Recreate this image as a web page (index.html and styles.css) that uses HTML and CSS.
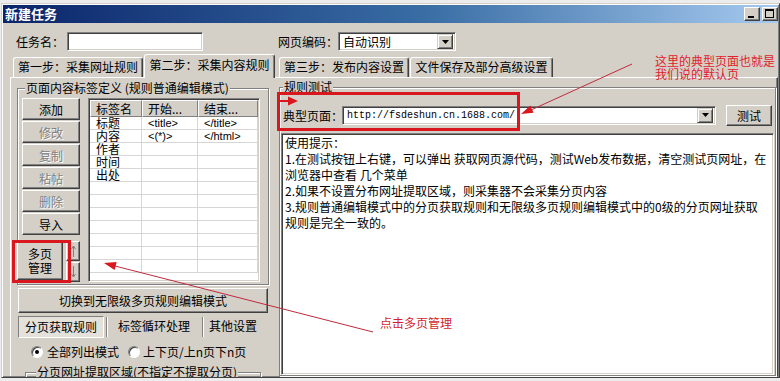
FILE: index.html
```html
<!DOCTYPE html>
<html lang="zh-CN">
<head>
    <meta charset="UTF-8">
    <title>新建任务</title>
    <link rel="stylesheet" href="styles.css">
</head>
<body>
    <!-- Dialog window -->
    <div class="window">
        <div class="titlebar">
            <span class="title">新建任务</span>
            <span class="tb-btn"><span class="min-glyph"></span></span>
            <span class="tb-btn"><span class="max-glyph"></span></span>
        </div>

        <!-- Task name / page encoding -->
        <div class="top-row">
            <span class="lbl name-lbl">任务名：</span>
            <span class="field name-field"></span>
            <span class="lbl enc-lbl">网页编码：</span>
            <span class="field combo enc-combo">
                <span class="combo-text">自动识别</span>
                <span class="drop"><svg width="7" height="4"><path d="M0 0h7L3.5 4z" fill="#000"/></svg></span>
            </span>
        </div>

        <!-- Step tabs -->
        <div class="tabs">
            <span class="tab tab-1">第一步：采集网址规则</span>
            <span class="tab active">第二步：采集内容规则</span>
            <span class="tab tab-3">第三步：发布内容设置</span>
            <span class="tab tab-4">文件保存及部分高级设置</span>
        </div>

        <div class="tab-body">
            <!-- Left side: tag definitions -->
            <div class="left">
                <div class="group tag-group">
                    <div class="legend">页面内容标签定义 (规则普通编辑模式)</div>
                    <div class="tag-inner">
                        <div class="btn-col">
                            <div class="btn">添加</div>
                            <div class="btn disabled">修改</div>
                            <div class="btn disabled">复制</div>
                            <div class="btn disabled">粘帖</div>
                            <div class="btn disabled">删除</div>
                            <div class="btn">导入</div>
                            <div class="multi-row">
                                <div class="btn multi-btn">多页<br>管理</div>
                                <div class="arrow-col">
                                    <div class="btn arrow-btn"><svg width="5" height="12"><path d="M2.5 1v11M0.5 4l2-3 2 3" stroke="#808080" fill="none"/></svg></div>
                                    <div class="btn arrow-btn"><svg width="5" height="12"><path d="M2.5 0v11M0.5 8l2 3 2-3" stroke="#808080" fill="none"/></svg></div>
                                </div>
                            </div>
                        </div>
                        <div class="grid-box">
                            <div class="grid-head">
                                <div class="gh c1">标签名</div>
                                <div class="gh c2">开始...</div>
                                <div class="gh c3">结束...</div>
                            </div>
                            <div class="grid-row"><div class="gc c1">标题</div><div class="gc c2 code">&lt;title&gt;</div><div class="gc c3 code">&lt;/title&gt;</div></div>
                            <div class="grid-row"><div class="gc c1">内容</div><div class="gc c2 code">&lt;(*)&gt;</div><div class="gc c3 code">&lt;/html&gt;</div></div>
                            <div class="grid-row"><div class="gc c1">作者</div><div class="gc c2"></div><div class="gc c3"></div></div>
                            <div class="grid-row"><div class="gc c1">时间</div><div class="gc c2"></div><div class="gc c3"></div></div>
                            <div class="grid-row"><div class="gc c1">出处</div><div class="gc c2"></div><div class="gc c3"></div></div>
                            <div class="grid-row"><div class="gc c1"></div><div class="gc c2"></div><div class="gc c3"></div></div>
                            <div class="grid-row"><div class="gc c1"></div><div class="gc c2"></div><div class="gc c3"></div></div>
                            <div class="grid-row"><div class="gc c1"></div><div class="gc c2"></div><div class="gc c3"></div></div>
                            <div class="grid-row"><div class="gc c1"></div><div class="gc c2"></div><div class="gc c3"></div></div>
                            <div class="grid-row"><div class="gc c1"></div><div class="gc c2"></div><div class="gc c3"></div></div>
                            <div class="grid-row"><div class="gc c1"></div><div class="gc c2"></div><div class="gc c3"></div></div>
                            <div class="grid-row"><div class="gc c1"></div><div class="gc c2"></div><div class="gc c3"></div></div>
                        </div>
                    </div>
                </div>

                <div class="btn switch-btn">切换到无限级多页规则编辑模式</div>

                <div class="subtabs">
                    <div class="st st-on">分页获取规则</div>
                    <div class="st-sep"></div>
                    <div class="st st-2">标签循环处理</div>
                    <div class="st-sep"></div>
                    <div class="st st-3">其他设置</div>
                </div>

                <div class="radios">
                    <span class="radio"><span class="dot"></span></span>
                    <span class="radio-lbl">全部列出模式</span>
                    <span class="radio radio-2"></span>
                    <span class="radio-lbl lbl-2">上下页/上n页下n页</span>
                </div>

                <div class="group page-group">
                    <div class="legend">分页网址提取区域(不指定不提取分页)</div>
                </div>
            </div>

            <!-- Right side: rule test -->
            <div class="right">
                <div class="group test-group">
                    <div class="legend">规则测试</div>
                    <div class="url-row">
                        <span class="lbl">典型页面：</span>
                        <span class="field combo url-combo">
                            <span class="combo-text url-text">http://fsdeshun.cn.1688.com/</span>
                            <span class="drop"><svg width="7" height="4"><path d="M0 0h7L3.5 4z" fill="#000"/></svg></span>
                        </span>
                        <div class="btn test-btn">测试</div>
                    </div>
                    <div class="memo">
                        <div>使用提示：</div>
                        <div>1.在测试按钮上右键，可以弹出 获取网页源代码，测试Web发布数据，清空测试页网址，在</div>
                        <div>浏览器中查看 几个菜单</div>
                        <div>2.如果不设置分布网址提取区域，则采集器不会采集分页内容</div>
                        <div>3.规则普通编辑模式中的分页获取规则和无限级多页规则编辑模式中的0级的分页网址获取</div>
                        <div>规则是完全一致的。</div>
                    </div>
                </div>
            </div>
        </div>
    </div>

    <!-- Red annotations drawn over the screenshot -->
    <svg class="marks" width="780" height="381" viewBox="0 0 780 381">
        <g fill="none" stroke="#d8171f" stroke-width="3">
            <rect x="278.5" y="93.5" width="240" height="36"/>
            <rect x="13.5" y="241.5" width="56" height="40"/>
        </g>
        <g stroke="#c02a3c" stroke-width="1" fill="none">
            <line x1="632" y1="64" x2="531" y2="110"/>
            <line x1="373" y1="332" x2="115" y2="266"/>
        </g>
        <line x1="279" y1="101" x2="289" y2="101" stroke="#d8171f" stroke-width="2"/>
        <g fill="#d8171f">
            <polygon points="521,114 533.5,112.7 530.3,105.4"/>
            <polygon points="104,263 114.6,269.9 116.6,262.1"/>
            <polygon points="298,101 288,96.5 288,105.5"/>
        </g>
    </svg>
    <div class="note note-top">这里的典型页面也就是<br>我们说的默认页</div>
    <div class="note note-left">点击多页管理</div>
</body>
</html>
```

FILE: styles.css
```css
/* Win2000 style dialog */
* {
    box-sizing: border-box;
}

html {
    font-size: 12px;
    font-family: "Noto Sans CJK SC", "Liberation Sans", sans-serif;
}

body {
    margin: 0;
    width: 780px;
    height: 381px;
    overflow: hidden;
    position: relative;
    background-color: #ececec;
    color: #000;
}

.window {
    margin: 3px 0 0 1px;
    width: 779px;
    height: 375px;
    padding: 1px;
    display: flex;
    flex-direction: column;
    overflow: hidden;
    background-color: #d4d0c8;
    border: 1px solid;
    border-color: #d4d0c8 #404040 #404040 #d4d0c8;
    box-shadow: inset 1px 1px #fff, inset -1px -1px #808080;
}

/* Title bar */
.titlebar {
    flex: none;
    height: 18px;
    display: flex;
    align-items: center;
    padding-left: 2px;
    background: linear-gradient(to right, #0a246a, #3a6ea5 55%, #a6caf0);
}

.title {
    margin-right: auto;
    color: #fff;
    font-weight: bold;
    font-size: 13px;
    line-height: 18px;
}

.tb-btn {
    width: 16px;
    height: 14px;
    margin-left: 2px;
    background-color: #d4d0c8;
    border: 1px solid;
    border-color: #fff #404040 #404040 #fff;
    box-shadow: inset -1px -1px #808080;
}

.min-glyph {
    display: block;
    width: 6px;
    height: 2px;
    margin: 8px 0 0 3px;
    background-color: #000;
}

.max-glyph {
    display: block;
    width: 9px;
    height: 9px;
    margin: 1px 0 0 2px;
    border: 1px solid #000;
    border-top-width: 2px;
}

/* Common controls */
.lbl {
    line-height: 19px;
    white-space: nowrap;
}

.field {
    height: 19px;
    background-color: #fff;
    border: 1px solid;
    border-color: #808080 #fff #fff #808080;
    box-shadow: inset 1px 1px #404040, inset -1px -1px #d4d0c8;
}

.combo {
    display: flex;
    align-items: center;
    padding: 2px;
}

.combo-text {
    flex: 1;
    padding-left: 2px;
    line-height: 15px;
    white-space: nowrap;
}

.drop {
    width: 16px;
    height: 15px;
    display: flex;
    align-items: center;
    justify-content: center;
    background-color: #d4d0c8;
    border: 1px solid;
    border-color: #d4d0c8 #404040 #404040 #d4d0c8;
    box-shadow: inset 1px 1px #fff, inset -1px -1px #808080;
}

.btn {
    height: 22px;
    display: flex;
    align-items: center;
    justify-content: center;
    white-space: nowrap;
    background-color: #d4d0c8;
    border: 1px solid;
    border-color: #fff #404040 #404040 #fff;
    box-shadow: inset -1px -1px #808080;
}

.btn.disabled {
    color: #808080;
    text-shadow: 1px 1px #fff;
}

.group {
    border: 1px solid #808080;
    box-shadow: inset 1px 1px #fff, 1px 1px #fff;
}

.legend {
    width: max-content;
    height: 14px;
    margin: -8px 0 0 7px;
    padding: 0 1px;
    line-height: 14px;
    white-space: nowrap;
    background-color: #d4d0c8;
}

/* Top row */
.top-row {
    flex: none;
    display: flex;
    align-items: center;
    height: 19px;
    margin-top: 9px;
}

.name-lbl {
    margin-left: 13px;
}

.name-field {
    width: 136px;
    margin-left: 3px;
}

.enc-lbl {
    margin-left: 75px;
}

.enc-combo {
    width: 118px;
}

/* Tabs */
.tabs {
    flex: none;
    display: flex;
    align-items: flex-end;
    height: 23px;
    margin-top: 3px;
    padding-left: 10px;
}

.tab {
    width: 130px;
    height: 20px;
    line-height: 18px;
    text-align: center;
    white-space: nowrap;
    border: 1px solid;
    border-bottom: none;
    border-color: #fff #404040 #fff #fff;
    box-shadow: inset -1px 0 #808080;
    border-radius: 3px 3px 0 0;
}

.tab.active {
    position: relative;
    z-index: 1;
    width: 131px;
    height: 24px;
    margin: 0 4px -1px 1px;
    line-height: 20px;
    background-color: #d4d0c8;
}

.tab-4 {
    width: 143px;
    margin-left: 1px;
}

.tab-body {
    flex: 1;
    min-height: 0;
    display: flex;
    margin-left: 7px;
    border: 1px solid;
    border-bottom: none;
    border-color: #fff #404040 #fff #fff;
    box-shadow: inset -1px 0 #808080;
}

/* Left side */
.left {
    flex: none;
    width: 266px;
    display: flex;
    flex-direction: column;
}

.tag-group {
    flex: none;
    width: 252px;
    height: 197px;
    margin: 10px 0 0 6px;
}

.tag-inner {
    display: flex;
    margin-top: 3px;
    padding-left: 4px;
}

.btn-col {
    width: 58px;
    display: flex;
    flex-direction: column;
    gap: 1px;
}

.multi-row {
    display: flex;
    align-items: center;
    height: 42px;
    margin: 4px 0 0 -5px;
}

.btn.multi-btn {
    width: 46px;
    height: 38px;
    line-height: 14px;
    text-align: center;
}

.arrow-col {
    align-self: stretch;
    width: 14px;
    margin-left: 3px;
    padding-top: 1px;
    display: flex;
    flex-direction: column;
    gap: 1px;
}

.btn.arrow-btn {
    height: 20px;
}

.grid-box {
    width: 172px;
    height: 184px;
    margin-left: 8px;
    padding: 1px;
    overflow: hidden;
    background-color: #fff;
    border: 1px solid;
    border-color: #808080 #fff #fff #808080;
    box-shadow: inset 1px 1px #404040, inset -1px -1px #d4d0c8;
}

.grid-head {
    display: flex;
    height: 17px;
}

.gh {
    padding-left: 5px;
    line-height: 15px;
    white-space: nowrap;
    background-color: #d4d0c8;
    border: 1px solid;
    border-color: #fff #808080 #808080 #fff;
}

.c1 {
    width: 52px;
}

.c2 {
    width: 56px;
}

.c3 {
    width: 60px;
}

.grid-row {
    display: flex;
    height: 13px;
    border-bottom: 1px solid #d6d6d6;
}

.gc {
    padding-left: 6px;
    line-height: 12px;
    white-space: nowrap;
    border-right: 1px solid #d6d6d6;
}

.code {
    font-family: "Liberation Sans", sans-serif;
    font-size: 11px;
}

.btn.switch-btn {
    flex: none;
    width: 250px;
    height: 25px;
    margin: 3px 0 0 7px;
}

.subtabs {
    flex: none;
    display: flex;
    align-items: center;
    height: 22px;
    margin: 3px 0 0 7px;
}

.st {
    height: 22px;
    line-height: 20px;
    text-align: center;
    white-space: nowrap;
}

.st-on {
    width: 86px;
    background-color: #e4e1db;
    border: 1px solid;
    border-color: #808080 #fff #fff #808080;
}

.st-sep {
    width: 2px;
    height: 20px;
    margin-left: 2px;
    border-left: 1px solid #808080;
    border-right: 1px solid #fff;
}

.st-2 {
    width: 92px;
}

.st-3 {
    width: 58px;
}

.radios {
    flex: none;
    display: flex;
    align-items: center;
    height: 13px;
    margin: 7px 0 0 20px;
}

.radio {
    width: 12px;
    height: 12px;
    display: flex;
    align-items: center;
    justify-content: center;
    border-radius: 50%;
    background-color: #fff;
    border: 1px solid;
    border-color: #808080 #fff #fff #808080;
    box-shadow: inset 1px 1px #404040;
}

.dot {
    width: 4px;
    height: 4px;
    border-radius: 50%;
    background-color: #000;
}

.radio-lbl {
    margin-left: 4px;
    line-height: 13px;
    white-space: nowrap;
}

.radio-2 {
    margin-left: 9px;
}

.lbl-2 {
    margin-left: 3px;
}

.page-group {
    flex: none;
    width: 236px;
    height: 40px;
    margin: 14px 0 0 14px;
}

.page-group .legend {
    margin-left: 10px;
}

/* Right side */
.right {
    flex: 1;
    display: flex;
    flex-direction: column;
}

.test-group {
    flex: 1;
    display: flex;
    flex-direction: column;
    margin: 9px 1px 0 2px;
}

.test-group .legend {
    margin-left: 3px;
}

.url-row {
    display: flex;
    align-items: center;
    height: 22px;
    margin-top: 10px;
    padding-left: 3px;
}

.url-combo {
    width: 374px;
    margin-left: -1px;
}

.url-text {
    font-family: "Liberation Mono", monospace;
    font-size: 10px;
}

.btn.test-btn {
    width: 46px;
    height: 21px;
    margin-left: 10px;
}

.memo {
    flex: 1;
    width: 493px;
    margin: 7px 0 0 1px;
    padding: 1px 0 0 3px;
    line-height: 16px;
    white-space: nowrap;
    background-color: #fff;
    border: 1px solid;
    border-color: #808080 #fff #fff #808080;
    box-shadow: inset 1px 1px #404040, inset -1px -1px #d4d0c8;
}

/* Annotations */
.marks {
    position: absolute;
    left: 0;
    top: 0;
    pointer-events: none;
}

.note {
    position: absolute;
    font-size: 12px;
    line-height: 13px;
    white-space: nowrap;
    color: #e2212b;
}

.note-top {
    left: 655px;
    top: 54px;
}

.note-left {
    left: 380px;
    top: 316px;
    color: #d01f2d;
}
```
